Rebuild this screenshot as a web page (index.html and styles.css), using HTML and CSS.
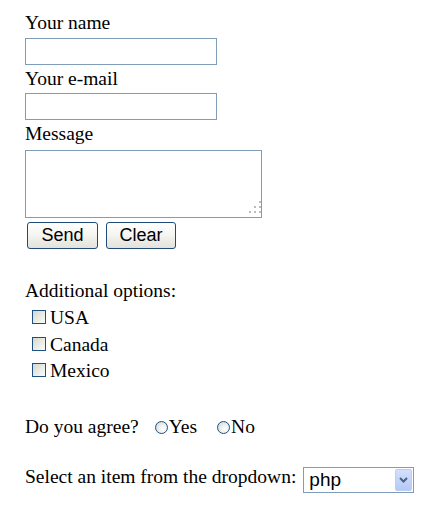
FILE: index.html
```html
<!DOCTYPE html>
<html>
<head>
<meta charset="utf-8">
<title>Form</title>
<link rel="stylesheet" href="styles.css">
</head>
<body>
<form class="form">
  <div class="label">Your name</div>
  <input class="field field-first" type="text">
  <div class="label">Your e-mail</div>
  <input class="field field-second" type="text">
  <div class="label">Message</div>
  <div class="area-wrap">
    <textarea class="area"></textarea>
    <svg class="grip" width="12" height="12" viewBox="0 0 12 12"><rect x="10" y="0" width="2" height="2"/><rect x="5" y="5" width="2" height="2"/><rect x="10" y="5" width="2" height="2"/><rect x="0" y="10" width="2" height="2"/><rect x="5" y="10" width="2" height="2"/><rect x="10" y="10" width="2" height="2"/></svg>
  </div>
  <div class="buttons">
    <button type="button" class="btn btn-send">Send</button>
    <button type="button" class="btn btn-clear">Clear</button>
  </div>
  <div class="label options-title">Additional options:</div>
  <div class="options">
    <label class="opt"><input type="checkbox" class="check">USA</label>
    <label class="opt"><input type="checkbox" class="check">Canada</label>
    <label class="opt"><input type="checkbox" class="check">Mexico</label>
  </div>
  <div class="label agree"><span>Do you agree?</span><label class="radio-label"><input type="radio" name="agree" class="radio">Yes</label><label class="radio-label radio-label-no"><input type="radio" name="agree" class="radio">No</label></div>
  <div class="select-row">
    <span class="label">Select an item from the dropdown:</span>
    <span class="select-wrap">
      <select class="select"><option>php</option><option>asp</option><option>jsp</option></select>
      <span class="select-btn"><svg width="9" height="6" viewBox="0 0 9 6"><path d="M1 1 L4.5 4.5 L8 1" fill="none" stroke="#4d6185" stroke-width="2"/></svg></span>
    </span>
  </div>
</form>
</body>
</html>
```

FILE: styles.css
```css
body {
  margin: 0;
  background: #fff;
  color: #000;
  font-family: "Liberation Serif", "Times New Roman", serif;
  font-size: 19.5px;
}

.form {
  display: flex;
  flex-direction: column;
  align-items: flex-start;
  padding: 13px 0 0 25px;
}

.label {
  line-height: 20px;
}

.field {
  display: block;
  box-sizing: border-box;
  width: 192px;
  height: 27px;
  border: 1px solid #7f9db9;
  padding: 0 3px;
  margin: 0 0 4px;
  background: #fff;
  outline: none;
}

.field-first {
  margin-top: 5px;
}

.field-second {
  margin-top: 4px;
}

.area-wrap {
  position: relative;
  margin-top: 6px;
  width: 237px;
  height: 68px;
}

.area {
  display: block;
  box-sizing: border-box;
  width: 237px;
  height: 68px;
  margin: 0;
  border: 1px solid #7f9db9;
  resize: none;
  outline: none;
}

.grip {
  position: absolute;
  right: 1px;
  bottom: 5px;
  fill: #bcbcbc;
}

.buttons {
  display: flex;
  gap: 8px;
  margin: 4px 0 0 2px;
}

.btn {
  box-sizing: border-box;
  height: 27px;
  padding: 0;
  border: 1px solid #1f4a79;
  border-radius: 3px;
  background: linear-gradient(#ffffff 0%, #f4f4f0 50%, #e2e1da 100%);
  font-family: "Liberation Sans", Arial, sans-serif;
  font-size: 18px;
  color: #000;
}

.btn-send {
  width: 71px;
}

.btn-clear {
  width: 70px;
}

.options-title {
  margin-top: 32px;
}

.options {
  display: flex;
  flex-direction: column;
  margin-top: 4px;
}

.opt {
  line-height: 26.5px;
  padding-left: 7px;
}

.check {
  appearance: none;
  -webkit-appearance: none;
  box-sizing: border-box;
  width: 14px;
  height: 14px;
  margin: 0 4px 0 0;
  border: 1px solid #1c5180;
  background: linear-gradient(135deg, #d6d6cf 0%, #ececE6 55%, #fbfbf9 100%);
  vertical-align: baseline;
}

.agree {
  margin-top: 32px;
}

.radio-label {
  margin-left: 16px;
}

.radio-label-no {
  margin-left: 20px;
}

.radio {
  appearance: none;
  -webkit-appearance: none;
  box-sizing: border-box;
  width: 13px;
  height: 13px;
  margin: 0 1px -1px 0;
  border: 1px solid #1c5180;
  border-radius: 50%;
  background: radial-gradient(circle at 65% 65%, #ffffff 0%, #eeeeea 45%, #cfcfc7 100%);
  vertical-align: baseline;
}

.select-row {
  display: flex;
  align-items: flex-start;
  margin-top: 30px;
}

.select-wrap {
  position: relative;
  margin-left: 7px;
  width: 111px;
  height: 26px;
}

.select {
  appearance: none;
  -webkit-appearance: none;
  box-sizing: border-box;
  width: 111px;
  height: 26px;
  margin: 0;
  padding: 0 0 0 5px;
  border: 1px solid #7f9db9;
  border-radius: 0;
  background: #fff;
  font-family: "Liberation Sans", Arial, sans-serif;
  font-size: 19px;
  color: #000;
  outline: none;
}

.select-btn {
  position: absolute;
  top: 2px;
  right: 2px;
  bottom: 2px;
  width: 17px;
  box-sizing: border-box;
  border: 1px solid #bccdf1;
  border-radius: 2px;
  background: linear-gradient(#d3e0fd, #b4c9f5);
  display: flex;
  align-items: center;
  justify-content: center;
  pointer-events: none;
}
```
